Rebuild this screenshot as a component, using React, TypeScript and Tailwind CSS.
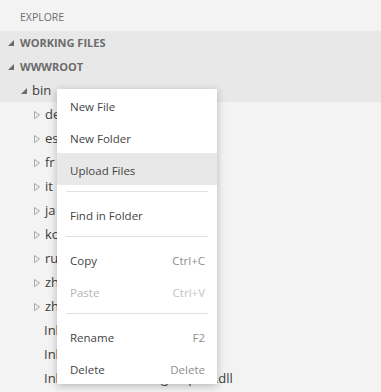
function Expanded() {
  return (
    <svg width="6" height="6" viewBox="0 0 6 6" className="shrink-0">
      <polygon points="6,0 6,6 0,6" fill="#6b6b6b" />
    </svg>
  );
}

function Collapsed() {
  return (
    <svg width="6" height="8" viewBox="0 0 6 8" className="shrink-0">
      <polygon points="0.5,0.5 5.5,4 0.5,7.5" fill="none" stroke="#a6a6a6" strokeWidth="1" />
    </svg>
  );
}

const folders = ["de", "es", "fr", "it", "ja", "ko", "ru", "zh-Hans", "zh-Hant"];
const files = ["Inline.Razor.dll", "Inline.Runtime.dll", "Inline.Mvc.Razor.TagHelpers.dll"];

type Item =
  | { label: string; shortcut?: string; disabled?: boolean; active?: boolean }
  | "sep";

const menu: Item[] = [
  { label: "New File" },
  { label: "New Folder" },
  { label: "Upload Files", active: true },
  "sep",
  { label: "Find in Folder" },
  "sep",
  { label: "Copy", shortcut: "Ctrl+C" },
  { label: "Paste", shortcut: "Ctrl+V", disabled: true },
  "sep",
  { label: "Rename", shortcut: "F2" },
  { label: "Delete", shortcut: "Delete" },
];

export default function App() {
  return (
    <div className="relative h-[392px] w-[381px] overflow-hidden bg-[#f3f3f3] font-['Segoe_UI','Open_Sans',sans-serif] text-[#3d3d3d]">
      <div className="flex h-[31px] items-center pl-5 pt-1 text-[10.5px] text-[#6f6f6f]">
        EXPLORE
      </div>

      <div className="bg-[#e8e8e8]">
        <div className="flex h-6 items-center gap-[6px] pl-[8px] text-[11px] font-bold text-[#6b6b6b]">
          <Expanded />
          WORKING FILES
        </div>
        <div className="flex h-6 items-center gap-[6px] pl-[8px] text-[11px] font-bold text-[#6b6b6b]">
          <Expanded />
          WWWROOT
        </div>
        <div className="flex h-[23px] items-center gap-[5px] pl-[21px] text-[13px]">
          <Expanded />
          bin
        </div>
      </div>

      <div className="pt-px">
        {folders.map((f) => (
          <div key={f} className="flex h-6 items-center gap-[5px] pl-[34px] text-[13px]">
            <Collapsed />
            {f}
          </div>
        ))}
        {files.map((f) => (
          <div key={f} className="flex h-6 items-center pl-[44px] text-[13px]">
            {f}
          </div>
        ))}
      </div>

      <div className="absolute left-[57px] top-[89px] w-[160px] bg-white text-[11.5px] shadow-[0_2px_8px_rgba(0,0,0,0.25)]">
        {menu.map((m, i) =>
          m === "sep" ? (
            <div key={i} className="px-[9px] py-[6px]">
              <div className="h-px bg-[#e0e0e0]" />
            </div>
          ) : (
            <div
              key={i}
              className={`flex h-8 items-center justify-between pl-[13px] pr-[12px] pt-1 ${
                m.active ? "bg-[#e8e8e8]" : ""
              } ${m.disabled ? "text-[#b4b4b4]" : "text-[#444]"}`}
            >
              <span>{m.label}</span>
              {m.shortcut && (
                <span className={m.disabled ? "text-[#c4c4c4]" : "text-[#8e8e8e]"}>
                  {m.shortcut}
                </span>
              )}
            </div>
          )
        )}
      </div>
    </div>
  );
}
